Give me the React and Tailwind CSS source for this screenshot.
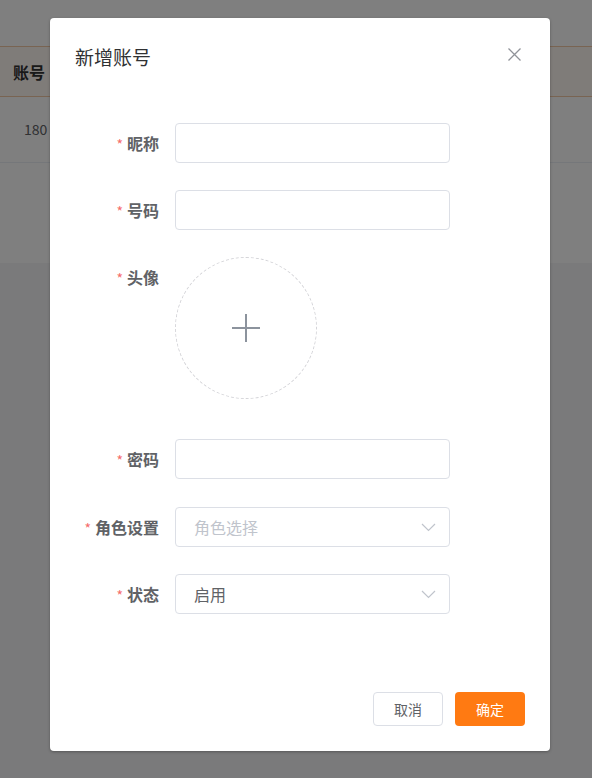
import React from "react";

const font = { fontFamily: '"Noto Sans CJK SC", "Noto Sans", sans-serif' };

function Field({ label, children, mb = "mb-[27px]" }) {
  return (
    <div className={`flex items-start ${mb}`}>
      <div className="w-[109px] shrink-0 text-right h-[40px] leading-[40px] text-[16px] font-bold text-[#606266]">
        <span className="text-[#f56c6c] font-normal mr-[4px] text-[14px]">*</span>
        {label}
      </div>
      <div className="ml-[16px]">{children}</div>
    </div>
  );
}

function Input({ children }) {
  return (
    <div className="w-[275px] h-[40px] border border-[#dcdfe6] rounded-[4px] bg-white flex items-center pl-[18px] pr-[13px] text-[16px]">
      {children}
    </div>
  );
}

function Chevron() {
  return (
    <svg width="15" height="9" viewBox="0 0 15 9" className="ml-auto">
      <path d="M1 1 L7.5 7.5 L14 1" fill="none" stroke="#c0c4cc" strokeWidth="1.2" />
    </svg>
  );
}

export default function App() {
  return (
    <div className="relative w-[592px] h-[778px] overflow-hidden bg-white" style={font}>
      {/* underlying page */}
      <div className="flex flex-col h-full">
        <div className="h-[46px]" />
        <div className="h-[51px] bg-[#fff9f3] border-y border-[#f3c9a4] flex items-center pl-[13px] text-[16px] font-bold text-[#333]">
          账号
        </div>
        <div className="h-[66px] border-b border-[#ebeef5] flex items-center pl-[24px] text-[14px] text-[#606266]">
          180
        </div>
        <div className="h-[100px]" />
        <div className="flex-1 bg-[#f4f4f6]" />
      </div>

      {/* overlay */}
      <div className="absolute inset-0 bg-black/50">
        <div className="ml-[50px] mt-[18px] w-[500px] bg-white rounded-[4px] shadow-[0_1px_3px_rgba(0,0,0,0.3)] flex flex-col">
          <div className="flex items-start pt-[29px] px-[25px]">
            <div className="text-[19px] leading-[20px] text-[#303133]">新增账号</div>
            <svg width="13" height="13" viewBox="0 0 13 13" className="ml-auto mt-[1px] mr-[4px]">
              <path d="M0.5 0.5 L12.5 12.5 M12.5 0.5 L0.5 12.5" stroke="#909399" strokeWidth="1.3" />
            </svg>
          </div>

          <div className="mt-[56px] flex flex-col">
            <Field label="昵称">
              <Input />
            </Field>
            <Field label="号码">
              <Input />
            </Field>
            <Field label="头像" mb="mb-[40px]">
              <div className="w-[142px] h-[142px] rounded-full border border-dashed border-[#d4d4d8] flex items-center justify-center">
                <svg width="30" height="30" viewBox="0 0 30 30">
                  <path d="M15 1 V29 M1 15 H29" stroke="#8c939d" strokeWidth="2" />
                </svg>
              </div>
            </Field>
            <Field label="密码" mb="mb-[28px]">
              <Input />
            </Field>
            <Field label="角色设置" mb="mb-[27px]">
              <Input>
                <span className="text-[#c0c4cc]">角色选择</span>
                <Chevron />
              </Input>
            </Field>
            <Field label="状态" mb="mb-0">
              <Input>
                <span className="text-[#606266]">启用</span>
                <Chevron />
              </Input>
            </Field>
          </div>

          <div className="mt-[78px] pb-[25px] pr-[25px] flex justify-end gap-[12px]">
            <button className="w-[70px] h-[34px] border border-[#dcdfe6] rounded-[4px] bg-white text-[14px] text-[#606266]">
              取消
            </button>
            <button className="w-[70px] h-[34px] rounded-[4px] bg-[#ff7a12] text-[14px] text-white">
              确定
            </button>
          </div>
        </div>
      </div>
    </div>
  );
}
